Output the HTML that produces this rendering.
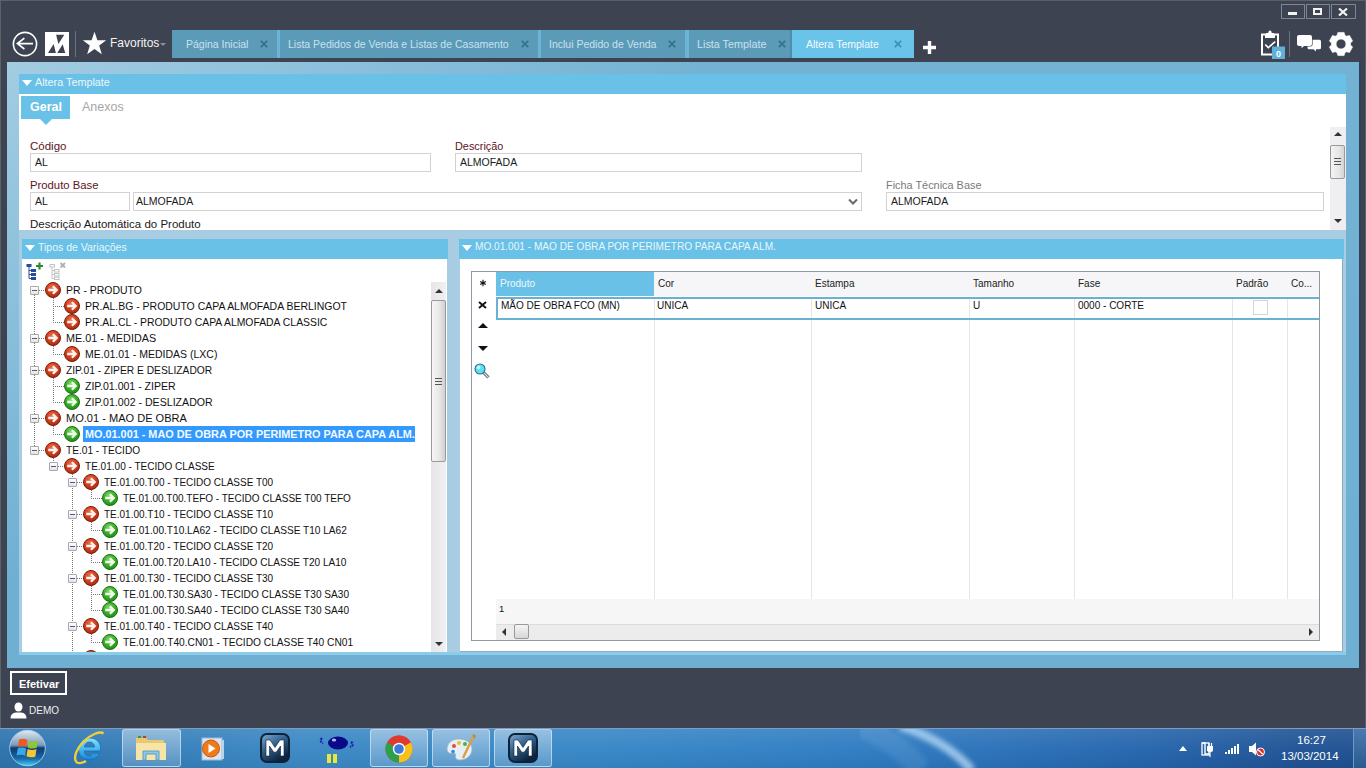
<!DOCTYPE html><html><head><meta charset="utf-8"><style>

*{margin:0;padding:0;box-sizing:border-box}
html,body{width:1366px;height:768px;overflow:hidden}
body{position:relative;background:#3d4350;font-family:"Liberation Sans",sans-serif;color:#1e1e1e}
.ab{position:absolute}
.t{position:absolute;white-space:nowrap;line-height:1}
.tab{position:absolute;top:30px;height:28px;background:#5b9bb8}
.tab .tx{position:absolute;top:9px;font-size:10.5px;color:#c9e2ee;white-space:nowrap;line-height:1}
.tab .cl{position:absolute;top:10px;width:8px;height:8px}
.fld{position:absolute;background:#fff;border:1px solid #d2d2d2;height:19px}
.fld span{position:absolute;left:4px;top:3px;font-size:10.5px;color:#1a1a1a;white-space:nowrap;line-height:1}
.lbl{position:absolute;font-size:11.5px;color:#5e1424;white-space:nowrap;line-height:1}
.hdr{position:absolute;height:20px;background:#69c1e7}
.hdr .tri{position:absolute;left:3px;top:6px;width:0;height:0;border-left:5px solid transparent;border-right:5px solid transparent;border-top:6px solid #fff}
.hdr span{position:absolute;left:16px;top:3px;font-size:10.5px;color:#e9f6fc;white-space:nowrap;line-height:1}
.row{position:absolute;height:16px;white-space:nowrap}
.row .tx{position:absolute;top:4px;font-size:10.55px;color:#111;line-height:1}
.dv{position:absolute;width:1px;background-image:linear-gradient(#777 50%,transparent 50%);background-size:1px 2px}
.dh{position:absolute;height:1px;background-image:linear-gradient(90deg,#777 50%,transparent 50%);background-size:2px 1px}
.exp{position:absolute;width:9px;height:9px;border:1px solid #a8a8a8;background:linear-gradient(#fff,#e4e4e4);border-radius:1px}
.exp:after{content:"";position:absolute;left:1px;top:3px;width:5px;height:1px;background:#55558f}
.ic{position:absolute;width:16px;height:16px}
.gh{position:absolute;top:272px;height:24px;font-size:9.5px;color:#222;line-height:1}
.gh span{position:absolute;left:4px;top:8px;white-space:nowrap}
.csep{position:absolute;top:297px;width:1px;height:302px;background:#e6e6e6}
.gc{position:absolute;top:301px;font-size:10px;color:#111;white-space:nowrap;line-height:1}

</style></head><body>
<svg width="0" height="0" style="position:absolute">
<defs>
<radialGradient id="gr" cx="45%" cy="35%" r="65%"><stop offset="0" stop-color="#f0745a"/><stop offset="0.55" stop-color="#d2401f"/><stop offset="1" stop-color="#a82a10"/></radialGradient>
<radialGradient id="gg" cx="45%" cy="35%" r="65%"><stop offset="0" stop-color="#8ee070"/><stop offset="0.55" stop-color="#3cb02c"/><stop offset="1" stop-color="#238a18"/></radialGradient>
<symbol id="ir" viewBox="0 0 16 16"><circle cx="8" cy="8" r="7.5" fill="url(#gr)" stroke="#7a1e0c" stroke-width="1"/><path d="M3.2 8H11.6M7.9 4.2L11.7 8L7.9 11.8" fill="none" stroke="#fff3ee" stroke-width="2.3"/></symbol>
<symbol id="ig" viewBox="0 0 16 16"><circle cx="8" cy="8" r="7.5" fill="url(#gg)" stroke="#1f6e14" stroke-width="1"/><path d="M3.2 8H11.6M7.9 4.2L11.7 8L7.9 11.8" fill="none" stroke="#f2ffee" stroke-width="2.3"/></symbol>
</defs></svg>
<div class="ab" style="left:0;top:0;width:1366px;height:1px;background:#5a606a"></div>
<div class="ab" style="left:0;top:0;width:1px;height:728px;background:#5a6468"></div>
<div class="ab" style="left:1365px;top:0;width:1px;height:728px;background:#5a5e68"></div>
<div class="ab" style="left:1281px;top:4px;width:24px;height:15px;border:1px solid #7b8794"></div>
<div class="ab" style="left:1306px;top:4px;width:24px;height:15px;border:1px solid #7b8794"></div>
<div class="ab" style="left:1331px;top:4px;width:25px;height:15px;border:1px solid #7b8794"></div>
<div class="ab" style="left:1288px;top:12px;width:9px;height:3px;background:#f2f2f2"></div>
<div class="ab" style="left:1313px;top:8px;width:9px;height:7px;border:2px solid #f2f2f2;border-top-width:2px"></div>
<svg class="ab" style="left:1338px;top:8px" width="10" height="8" viewBox="0 0 10 8"><path d="M1 0.5L9 7.5M9 0.5L1 7.5" stroke="#f2f2f2" stroke-width="2.2"/></svg>
<svg class="ab" style="left:12px;top:31px" width="26" height="26" viewBox="0 0 26 26"><circle cx="13" cy="13" r="11.6" fill="none" stroke="#fff" stroke-width="1.6"/><path d="M5.2 12.6H21M12.4 7.2L5.4 12.6L12.4 18" fill="none" stroke="#fff" stroke-width="1.7" stroke-linejoin="miter"/></svg>
<svg class="ab" style="left:45px;top:32px" width="24" height="24" viewBox="0 0 24 24"><rect width="24" height="24" fill="#fff"/><path d="M11.1 2.8H19.3L13.4 11.9Z M3 21H10.9L8.6 12.1Z M12.2 21H20.2L17.7 12.3Z" fill="#3d4350"/></svg>
<div class="ab" style="left:75px;top:31px;width:1px;height:26px;background:#6a727d"></div>
<svg class="ab" style="left:82px;top:31px" width="25" height="25" viewBox="0 0 25 25"><path d="M12.5 0.8L15.4 9.2L24.2 9.3L17.2 14.6L19.8 23.2L12.5 18L5.2 23.2L7.8 14.6L0.8 9.3L9.6 9.2Z" fill="#fff"/></svg>
<div class="t" style="left:110px;top:37px;font-size:12px;color:#f4f4f4">Favoritos</div>
<div class="ab" style="left:160px;top:43px;width:0;height:0;border-left:3px solid transparent;border-right:3px solid transparent;border-top:3px solid #8a929c"></div>
<div class="tab" style="left:172px;width:105px;background:#5b9bb8"><div class="tx" style="left:14px;color:#c9e2ee;font-size:10.5px">Página Inicial</div><svg class="cl" style="left:88px" viewBox="0 0 8 8"><path d="M0.8 0.8L7.2 7.2M7.2 0.8L0.8 7.2" stroke="#3a6f88" stroke-width="1.7"/></svg></div>
<div class="tab" style="left:280px;width:258px;background:#5b9bb8"><div class="tx" style="left:8px;color:#c9e2ee;font-size:10.5px">Lista Pedidos de Venda e Listas de Casamento</div><svg class="cl" style="left:241px" viewBox="0 0 8 8"><path d="M0.8 0.8L7.2 7.2M7.2 0.8L0.8 7.2" stroke="#3a6f88" stroke-width="1.7"/></svg></div>
<div class="tab" style="left:541px;width:144px;background:#5b9bb8"><div class="tx" style="left:8px;color:#c9e2ee;font-size:10.5px">Inclui Pedido de Venda</div><svg class="cl" style="left:127px" viewBox="0 0 8 8"><path d="M0.8 0.8L7.2 7.2M7.2 0.8L0.8 7.2" stroke="#3a6f88" stroke-width="1.7"/></svg></div>
<div class="tab" style="left:689px;width:103px;background:#5b9bb8"><div class="tx" style="left:8px;color:#c9e2ee;font-size:10.8px">Lista Template</div><svg class="cl" style="left:89px" viewBox="0 0 8 8"><path d="M0.8 0.8L7.2 7.2M7.2 0.8L0.8 7.2" stroke="#3a6f88" stroke-width="1.7"/></svg></div>
<div class="tab" style="left:792px;width:122px;background:#6ac3e8"><div class="tx" style="left:14px;color:#f4fbff;font-size:10.5px">Altera Template</div><svg class="cl" style="left:102px" viewBox="0 0 8 8"><path d="M0.8 0.8L7.2 7.2M7.2 0.8L0.8 7.2" stroke="#3d90b5" stroke-width="1.7"/></svg></div>
<div class="ab" style="left:277px;top:30px;width:3px;height:28px;background:#6db5d6"></div>
<div class="ab" style="left:538px;top:30px;width:3px;height:28px;background:#6db5d6"></div>
<div class="ab" style="left:685px;top:30px;width:4px;height:28px;background:#6db5d6"></div>
<div class="ab" style="left:790px;top:30px;width:2px;height:28px;background:#4d8eac"></div>
<svg class="ab" style="left:922px;top:40px" width="15" height="15" viewBox="0 0 15 15"><path d="M7.5 1V14M1 7.5H14" stroke="#fff" stroke-width="3.4"/></svg>
<svg class="ab" style="left:1259px;top:30px" width="28" height="30" viewBox="0 0 28 30">
<path d="M3 4.5H7V7H15V4.5H19V24.5H3Z" fill="none" stroke="#fff" stroke-width="2"/>
<rect x="7" y="3" width="8" height="4" fill="#fff"/><circle cx="11" cy="2.2" r="1.6" fill="#fff"/>
<path d="M6.2 14.5L9.3 17.6L16.2 11.6" fill="none" stroke="#fff" stroke-width="1.6"/>
<rect x="13" y="16.5" width="13" height="12.5" fill="#5fb0da"/>
<text x="19.5" y="26.5" style="font:bold 9px 'Liberation Sans'" fill="#fff" text-anchor="middle">0</text>
</svg>
<div class="ab" style="left:1289px;top:31px;width:1px;height:26px;background:#6a727d"></div>
<svg class="ab" style="left:1296px;top:34px" width="26" height="20" viewBox="0 0 26 20">
<path d="M1 3Q1 1 3 1H14Q16 1 16 3V10Q16 12 14 12H8L5.5 14.2V12H3Q1 12 1 10Z" fill="#fff"/>
<path d="M10.5 5H24Q26 5 26 7V14Q26 16 24 16H20.5V18.6L17.5 16H12.5Q10.5 16 10.5 14V12.8H14Q17 12.8 17 10V5Z" fill="#3d4350"/>
<path d="M11.5 5.8H23.5Q25 5.8 25 7.3V13.8Q25 15.3 23.5 15.3H20V17.6L17.5 15.3H13Q11.5 15.3 11.5 13.8V12.5H14.5Q16.6 12.5 16.6 10.2V5.8Z" fill="#fff"/>
</svg>
<svg class="ab" style="left:1328px;top:31px" width="26" height="26" viewBox="0 0 26 26">
<path fill="#fff" fill-rule="evenodd" d="M9.10 4.23 L9.89 1.41 L16.11 1.41 L16.90 4.23 L18.64 5.23 L21.49 4.51 L24.59 9.89 L22.55 12.00 L22.55 14.00 L24.59 16.11 L21.49 21.49 L18.64 20.77 L16.90 21.77 L16.11 24.59 L9.89 24.59 L9.10 21.77 L7.36 20.77 L4.51 21.49 L1.41 16.11 L3.45 14.00 L3.45 12.00 L1.41 9.89 L4.51 4.51 L7.36 5.23Z M13 8.1A4.9 4.9 0 1 0 13.01 8.1Z" stroke="#fff" stroke-width="0.6" stroke-linejoin="round"/>
</svg>
<div class="ab" style="left:7px;top:62px;width:1352px;height:606px;background:radial-gradient(ellipse 700px 520px at 0px 0px,#a2cce2 0%,rgba(112,176,211,0) 100%),linear-gradient(#74b2d3 0px,#6eafd2 100%)"></div>
<div class="ab" style="left:1359px;top:62px;width:2px;height:606px;background:#2e4358"></div>
<div class="hdr" style="left:19px;top:74px;width:1327px"><div class="tri"></div><span style="font-size:10.8px">Altera Template</span></div>
<div class="ab" style="left:19px;top:94px;width:1327px;height:136px;background:#fff"></div>
<div class="ab" style="left:21px;top:96px;width:49px;height:23px;background:#69c1e7"></div>
<div class="ab" style="left:40px;top:119px;width:0;height:0;border-left:6px solid transparent;border-right:6px solid transparent;border-top:6px solid #69c1e7"></div>
<div class="t" style="left:30px;top:101px;font-size:12.5px;font-weight:bold;color:#fff">Geral</div>
<div class="t" style="left:82px;top:101px;font-size:12.5px;color:#a6a6a6">Anexos</div>
<div class="lbl" style="left:30px;top:141px">Código</div>
<div class="fld" style="left:30px;top:153px;width:401px"><span>AL</span></div>
<div class="lbl" style="left:455px;top:141px;font-size:10.9px">Descrição</div>
<div class="fld" style="left:455px;top:153px;width:407px"><span>ALMOFADA</span></div>
<div class="lbl" style="left:30px;top:180px;font-size:11.3px">Produto Base</div>
<div class="fld" style="left:30px;top:192px;width:100px"><span>AL</span></div>
<div class="fld" style="left:133px;top:192px;width:729px"><span style="left:2px">ALMOFADA</span><svg class="ab" style="left:714px;top:5px" width="10" height="7" viewBox="0 0 10 7"><path d="M1 1.5L5 5.5L9 1.5" fill="none" stroke="#6a6a6a" stroke-width="2"/></svg></div>
<div class="lbl" style="left:886px;top:180px;color:#7a7a7a;font-size:10.9px">Ficha Técnica Base</div>
<div class="fld" style="left:886px;top:192px;width:438px"><span>ALMOFADA</span></div>
<div class="t" style="left:30px;top:219px;font-size:11.5px;color:#1a1a1a">Descrição Automática do Produto</div>
<div class="ab" style="left:1330px;top:127px;width:16px;height:103px;background:#efeff1"></div>
<div class="ab" style="left:1334px;top:132px;width:0;height:0;border-left:4px solid transparent;border-right:4px solid transparent;border-bottom:4px solid #333"></div>
<div class="ab" style="left:1334px;top:219px;width:0;height:0;border-left:4px solid transparent;border-right:4px solid transparent;border-top:4px solid #333"></div>
<div class="ab" style="left:1330px;top:145px;width:15px;height:34px;border:1px solid #9a9a9a;border-radius:2px;background:linear-gradient(90deg,#f4f4f4,#e6e6e6 60%,#d4d4d6)"></div>
<div class="ab" style="left:1334px;top:158px;width:7px;height:1px;background:#555"></div>
<div class="ab" style="left:1334px;top:161px;width:7px;height:1px;background:#555"></div>
<div class="ab" style="left:1334px;top:164px;width:7px;height:1px;background:#555"></div>
<div class="ab" style="left:19px;top:230px;width:1327px;height:425px;background:#a8cde2"></div>
<div class="ab" style="left:19px;top:652px;width:1327px;height:3px;background:#8ccbea"></div>
<div class="hdr" style="left:22px;top:239px;width:426px"><div class="tri"></div><span>Tipos de Variações</span></div>
<div class="ab" style="left:22px;top:259px;width:425px;height:393px;background:#fff;overflow:hidden" id="lp">
<svg class="ab" style="left:4px;top:3px" width="18" height="18" viewBox="0 0 18 18">
<g fill="#2a4a9a"><rect x="0.5" y="2" width="5" height="3"/><rect x="5" y="7" width="5" height="3"/><rect x="5" y="11" width="5" height="3"/><rect x="5" y="15" width="5" height="3"/></g>
<path d="M3 5V16.5H5M3 8.5H5M3 12.5H5" fill="none" stroke="#2a4a9a" stroke-width="1"/>
<path d="M13.5 0.5V7.5M10 4H17" stroke="#2e8a2e" stroke-width="2.2"/></svg>
<svg class="ab" style="left:27px;top:3px" width="18" height="18" viewBox="0 0 18 18">
<g fill="none" stroke="#c4c4c4"><rect x="1" y="2.5" width="4.5" height="2.5"/><rect x="5.5" y="7.5" width="4.5" height="2.5"/><rect x="5.5" y="11.5" width="4.5" height="2.5"/><rect x="5.5" y="15" width="4.5" height="2.5"/>
<path d="M3 5V16.5H5.5M3 8.5H5.5M3 12.5H5.5"/></g>
<path d="M11.5 1L16 5.5M16 1L11.5 5.5" stroke="#b0b0b0" stroke-width="1.8"/></svg>
<div class="dh" style="left:17px;top:31px;width:6px"></div>
<div class="dh" style="left:31px;top:47px;width:11px"></div>
<div class="dh" style="left:31px;top:63px;width:11px"></div>
<div class="dh" style="left:17px;top:79px;width:6px"></div>
<div class="dh" style="left:31px;top:95px;width:11px"></div>
<div class="dh" style="left:17px;top:111px;width:6px"></div>
<div class="dh" style="left:31px;top:127px;width:11px"></div>
<div class="dh" style="left:31px;top:143px;width:11px"></div>
<div class="dh" style="left:17px;top:159px;width:6px"></div>
<div class="dh" style="left:31px;top:175px;width:11px"></div>
<div class="dh" style="left:17px;top:191px;width:6px"></div>
<div class="dh" style="left:36px;top:207px;width:6px"></div>
<div class="dh" style="left:55px;top:223px;width:6px"></div>
<div class="dh" style="left:69px;top:239px;width:11px"></div>
<div class="dh" style="left:55px;top:255px;width:6px"></div>
<div class="dh" style="left:69px;top:271px;width:11px"></div>
<div class="dh" style="left:55px;top:287px;width:6px"></div>
<div class="dh" style="left:69px;top:303px;width:11px"></div>
<div class="dh" style="left:55px;top:319px;width:6px"></div>
<div class="dh" style="left:69px;top:335px;width:11px"></div>
<div class="dh" style="left:69px;top:351px;width:11px"></div>
<div class="dh" style="left:55px;top:367px;width:6px"></div>
<div class="dh" style="left:69px;top:383px;width:11px"></div>
<div class="dh" style="left:55px;top:399px;width:6px"></div>
<div class="dv" style="left:31px;top:39px;height:24px"></div>
<div class="dv" style="left:31px;top:87px;height:8px"></div>
<div class="dv" style="left:31px;top:119px;height:24px"></div>
<div class="dv" style="left:31px;top:167px;height:8px"></div>
<div class="dv" style="left:31px;top:199px;height:8px"></div>
<div class="dv" style="left:50px;top:215px;height:178px"></div>
<div class="dv" style="left:69px;top:231px;height:8px"></div>
<div class="dv" style="left:69px;top:263px;height:8px"></div>
<div class="dv" style="left:69px;top:295px;height:8px"></div>
<div class="dv" style="left:69px;top:327px;height:24px"></div>
<div class="dv" style="left:69px;top:375px;height:8px"></div>
<div class="dv" style="left:12px;top:32px;height:160px"></div>
<div class="exp" style="left:8px;top:27px"></div>
<div class="exp" style="left:8px;top:75px"></div>
<div class="exp" style="left:8px;top:107px"></div>
<div class="exp" style="left:8px;top:155px"></div>
<div class="exp" style="left:8px;top:187px"></div>
<div class="exp" style="left:27px;top:203px"></div>
<div class="exp" style="left:46px;top:219px"></div>
<div class="exp" style="left:46px;top:251px"></div>
<div class="exp" style="left:46px;top:283px"></div>
<div class="exp" style="left:46px;top:315px"></div>
<div class="exp" style="left:46px;top:363px"></div>
<div class="exp" style="left:46px;top:395px"></div>
<svg class="ic" style="left:23px;top:23px" viewBox="0 0 16 16"><use href="#ir"/></svg>
<div class="row" style="left:0;top:23px"><div class="tx" style="left:44px;font-size:10.46px">PR - PRODUTO</div></div>
<svg class="ic" style="left:42px;top:39px" viewBox="0 0 16 16"><use href="#ir"/></svg>
<div class="row" style="left:0;top:39px"><div class="tx" style="left:63px;font-size:10.47px">PR.AL.BG - PRODUTO CAPA ALMOFADA BERLINGOT</div></div>
<svg class="ic" style="left:42px;top:55px" viewBox="0 0 16 16"><use href="#ir"/></svg>
<div class="row" style="left:0;top:55px"><div class="tx" style="left:63px;font-size:10.4px">PR.AL.CL - PRODUTO CAPA ALMOFADA CLASSIC</div></div>
<svg class="ic" style="left:23px;top:71px" viewBox="0 0 16 16"><use href="#ir"/></svg>
<div class="row" style="left:0;top:70px"><div class="tx" style="left:44px;font-size:10.82px">ME.01 - MEDIDAS</div></div>
<svg class="ic" style="left:42px;top:87px" viewBox="0 0 16 16"><use href="#ir"/></svg>
<div class="row" style="left:0;top:86px"><div class="tx" style="left:63px;font-size:10.51px">ME.01.01 - MEDIDAS (LXC)</div></div>
<svg class="ic" style="left:23px;top:103px" viewBox="0 0 16 16"><use href="#ir"/></svg>
<div class="row" style="left:0;top:103px"><div class="tx" style="left:44px;font-size:10.25px">ZIP.01 - ZIPER E DESLIZADOR</div></div>
<svg class="ic" style="left:42px;top:119px" viewBox="0 0 16 16"><use href="#ig"/></svg>
<div class="row" style="left:0;top:118px"><div class="tx" style="left:63px;font-size:10.55px">ZIP.01.001 - ZIPER</div></div>
<svg class="ic" style="left:42px;top:135px" viewBox="0 0 16 16"><use href="#ig"/></svg>
<div class="row" style="left:0;top:134px"><div class="tx" style="left:63px;font-size:10.62px">ZIP.01.002 - DESLIZADOR</div></div>
<svg class="ic" style="left:23px;top:151px" viewBox="0 0 16 16"><use href="#ir"/></svg>
<div class="row" style="left:0;top:150px"><div class="tx" style="left:44px;font-size:11.06px">MO.01 - MAO DE OBRA</div></div>
<svg class="ic" style="left:42px;top:167px" viewBox="0 0 16 16"><use href="#ig"/></svg>
<div class="ab" style="left:61px;top:167px;width:332px;height:16px;background:#3399ff"></div>
<div class="row" style="left:0;top:166px"><div class="tx" style="left:63px;color:#f2fbff;font-weight:bold;font-size:10.86px">MO.01.001 - MAO DE OBRA POR PERIMETRO PARA CAPA ALM.</div></div>
<svg class="ic" style="left:23px;top:183px" viewBox="0 0 16 16"><use href="#ir"/></svg>
<div class="row" style="left:0;top:183px"><div class="tx" style="left:44px;font-size:10.13px">TE.01 - TECIDO</div></div>
<svg class="ic" style="left:42px;top:199px" viewBox="0 0 16 16"><use href="#ir"/></svg>
<div class="row" style="left:0;top:199px"><div class="tx" style="left:63px;font-size:10.04px">TE.01.00 - TECIDO CLASSE</div></div>
<svg class="ic" style="left:61px;top:215px" viewBox="0 0 16 16"><use href="#ir"/></svg>
<div class="row" style="left:0;top:215px"><div class="tx" style="left:82px;font-size:10.01px">TE.01.00.T00 - TECIDO CLASSE T00</div></div>
<svg class="ic" style="left:80px;top:231px" viewBox="0 0 16 16"><use href="#ig"/></svg>
<div class="row" style="left:0;top:231px"><div class="tx" style="left:101px;font-size:10.0px">TE.01.00.T00.TEFO - TECIDO CLASSE T00 TEFO</div></div>
<svg class="ic" style="left:61px;top:247px" viewBox="0 0 16 16"><use href="#ir"/></svg>
<div class="row" style="left:0;top:247px"><div class="tx" style="left:82px;font-size:10.01px">TE.01.00.T10 - TECIDO CLASSE T10</div></div>
<svg class="ic" style="left:80px;top:263px" viewBox="0 0 16 16"><use href="#ig"/></svg>
<div class="row" style="left:0;top:263px"><div class="tx" style="left:101px;font-size:10.12px">TE.01.00.T10.LA62 - TECIDO CLASSE T10 LA62</div></div>
<svg class="ic" style="left:61px;top:279px" viewBox="0 0 16 16"><use href="#ir"/></svg>
<div class="row" style="left:0;top:279px"><div class="tx" style="left:82px;font-size:10.01px">TE.01.00.T20 - TECIDO CLASSE T20</div></div>
<svg class="ic" style="left:80px;top:295px" viewBox="0 0 16 16"><use href="#ig"/></svg>
<div class="row" style="left:0;top:295px"><div class="tx" style="left:101px;font-size:10.1px">TE.01.00.T20.LA10 - TECIDO CLASSE T20 LA10</div></div>
<svg class="ic" style="left:61px;top:311px" viewBox="0 0 16 16"><use href="#ir"/></svg>
<div class="row" style="left:0;top:311px"><div class="tx" style="left:82px;font-size:10.01px">TE.01.00.T30 - TECIDO CLASSE T30</div></div>
<svg class="ic" style="left:80px;top:327px" viewBox="0 0 16 16"><use href="#ig"/></svg>
<div class="row" style="left:0;top:327px"><div class="tx" style="left:101px;font-size:10.12px">TE.01.00.T30.SA30 - TECIDO CLASSE T30 SA30</div></div>
<svg class="ic" style="left:80px;top:343px" viewBox="0 0 16 16"><use href="#ig"/></svg>
<div class="row" style="left:0;top:343px"><div class="tx" style="left:101px;font-size:10.12px">TE.01.00.T30.SA40 - TECIDO CLASSE T30 SA40</div></div>
<svg class="ic" style="left:61px;top:359px" viewBox="0 0 16 16"><use href="#ir"/></svg>
<div class="row" style="left:0;top:359px"><div class="tx" style="left:82px;font-size:10.01px">TE.01.00.T40 - TECIDO CLASSE T40</div></div>
<svg class="ic" style="left:80px;top:375px" viewBox="0 0 16 16"><use href="#ig"/></svg>
<div class="row" style="left:0;top:375px"><div class="tx" style="left:101px;font-size:10.2px">TE.01.00.T40.CN01 - TECIDO CLASSE T40 CN01</div></div>
<svg class="ic" style="left:61px;top:391px" viewBox="0 0 16 16"><use href="#ir"/></svg>
<div class="row" style="left:0;top:391px"><div class="tx" style="left:82px;font-size:10.1px">TE.01.00.T50</div></div>
<div class="ab" style="left:409px;top:23px;width:15px;height:370px;background:linear-gradient(90deg,#e6e6e8,#f0eff2)"></div>
<div class="ab" style="left:413px;top:30px;width:0;height:0;border-left:4px solid transparent;border-right:4px solid transparent;border-bottom:4px solid #333"></div>
<div class="ab" style="left:413px;top:383px;width:0;height:0;border-left:4px solid transparent;border-right:4px solid transparent;border-top:4px solid #333"></div>
<div class="ab" style="left:409px;top:41px;width:15px;height:162px;border:1px solid #9a9a9a;border-radius:2px;background:linear-gradient(90deg,#f6f6f6,#e8e8e8 55%,#d0d0d2)"></div>
<div class="ab" style="left:413px;top:119px;width:7px;height:1px;background:#555"></div>
<div class="ab" style="left:413px;top:122px;width:7px;height:1px;background:#555"></div>
<div class="ab" style="left:413px;top:125px;width:7px;height:1px;background:#555"></div>
</div>
<div class="hdr" style="left:459px;top:239px;width:885px"><div class="tri"></div><span style="font-size:10.1px">MO.01.001 - MAO DE OBRA POR PERIMETRO PARA CAPA ALM.</span></div>
<div class="ab" style="left:460px;top:259px;width:882px;height:392px;background:#fff"></div>
<div class="ab" style="left:1342px;top:259px;width:1px;height:393px;background:#90acbc"></div>
<div class="ab" style="left:460px;top:651px;width:883px;height:1px;background:#90acbc"></div>
<div class="ab" style="left:471px;top:271px;width:849px;height:370px;border:1px solid #8d9aa6;background:#fff"></div>
<div class="ab" style="left:496px;top:272px;width:823px;height:24px;background:#f6f6f8"></div>
<div class="ab" style="left:496px;top:272px;width:158px;height:24px;background:#69c1e7"></div>
<div class="t" style="left:500px;top:279px;font-size:10px;color:#eef8fd">Produto</div>
<div class="t" style="left:658px;top:279px;font-size:10px;color:#222">Cor</div>
<div class="t" style="left:815px;top:279px;font-size:10px;color:#222">Estampa</div>
<div class="t" style="left:973px;top:279px;font-size:10px;color:#222">Tamanho</div>
<div class="t" style="left:1078px;top:279px;font-size:10px;color:#222">Fase</div>
<div class="t" style="left:1236px;top:279px;font-size:10px;color:#222">Padrão</div>
<div class="t" style="left:1291px;top:279px;font-size:10px;color:#222">Co...</div>
<div class="csep" style="left:654px"></div>
<div class="csep" style="left:811px"></div>
<div class="csep" style="left:969px"></div>
<div class="csep" style="left:1074px"></div>
<div class="csep" style="left:1232px"></div>
<div class="csep" style="left:1287px"></div>
<div class="ab" style="left:496px;top:297px;width:823px;height:23px;border:2px solid #69b2d3;border-right:none"></div>
<div class="gc" style="left:501px">MÃO DE OBRA FCO (MN)</div>
<div class="gc" style="left:657px">UNICA</div>
<div class="gc" style="left:815px">UNICA</div>
<div class="gc" style="left:973px">U</div>
<div class="gc" style="left:1078px">0000 - CORTE</div>
<div class="ab" style="left:1253px;top:300px;width:15px;height:15px;border:1px solid #d6d6d6;background:#fff"></div>
<svg class="ab" style="left:479px;top:279px" width="8" height="8" viewBox="0 0 8 8"><path d="M4 0.8V7.2M1.2 2.4L6.8 5.6M6.8 2.4L1.2 5.6" stroke="#111" stroke-width="1.15"/></svg>
<svg class="ab" style="left:478px;top:301px" width="9" height="8" viewBox="0 0 9 8"><path d="M1 1L8 7M8 1L1 7" stroke="#111" stroke-width="1.9"/></svg>
<div class="ab" style="left:478px;top:323px;width:0;height:0;border-left:5px solid transparent;border-right:5px solid transparent;border-bottom:5px solid #111"></div>
<div class="ab" style="left:478px;top:346px;width:0;height:0;border-left:5px solid transparent;border-right:5px solid transparent;border-top:5px solid #111"></div>
<svg class="ab" style="left:474px;top:363px" width="16" height="16" viewBox="0 0 16 16"><path d="M9.5 9.5L14.5 14.5" stroke="#4a5560" stroke-width="3"/><path d="M9.5 9.5L14.5 14.5" stroke="#d8dde2" stroke-width="1.2"/><circle cx="6" cy="6" r="5" fill="#5ee0f2" stroke="#2a6a8a" stroke-width="1.1"/><circle cx="4.6" cy="4.4" r="1.8" fill="#c8f8ff"/></svg>
<div class="ab" style="left:496px;top:599px;width:823px;height:25px;background:#f6f6f6"></div>
<div class="t" style="left:499px;top:604px;font-size:9.5px;color:#111">1</div>
<div class="ab" style="left:496px;top:624px;width:823px;height:16px;background:#ececec;border-top:1px solid #dcdcdc"></div>
<div class="ab" style="left:502px;top:628px;width:0;height:0;border-top:4px solid transparent;border-bottom:4px solid transparent;border-right:4px solid #333"></div>
<div class="ab" style="left:1309px;top:628px;width:0;height:0;border-top:4px solid transparent;border-bottom:4px solid transparent;border-left:4px solid #333"></div>
<div class="ab" style="left:514px;top:624px;width:15px;height:15px;border:1px solid #999;border-radius:2px;background:linear-gradient(#f4f4f4,#d8d8d8)"></div>
<div class="ab" style="left:10px;top:671px;width:57px;height:24px;border:2px solid #fff"></div>
<div class="t" style="left:19px;top:679px;font-size:11px;font-weight:bold;color:#fff">Efetivar</div>
<svg class="ab" style="left:10px;top:702px" width="17" height="17" viewBox="0 0 17 17"><ellipse cx="8.5" cy="5" rx="4" ry="4.6" fill="#fff"/><path d="M0.5 16.5Q0.5 11 6 10.5H11Q16.5 11 16.5 16.5Z" fill="#fff"/></svg>
<div class="t" style="left:29px;top:706px;font-size:10px;color:#f0f0f0">DEMO</div>
<div class="ab" style="left:0;top:728px;width:1366px;height:40px;background:linear-gradient(90deg,#2c72ae 0px,#3a88c4 300px,#3686c6 600px,#2e7cc2 850px,#2a70b8 1000px,#2464ac 1150px,#1e5294 1300px,#1e4f90 1366px)"></div>
<div class="ab" style="left:0;top:729px;width:1366px;height:39px;background:linear-gradient(rgba(255,255,255,0.10),rgba(255,255,255,0.03) 50%,rgba(0,0,0,0.04))"></div>
<svg class="ab" style="left:860px;top:728px" width="160" height="40" viewBox="0 0 160 40"><defs><filter id="bl" x="-50%" y="-50%" width="200%" height="200%"><feGaussianBlur stdDeviation="2.5"/></filter></defs><path d="M40 -2Q85 12 112 42" fill="none" stroke="#b8dcf8" stroke-width="9" opacity="0.75" filter="url(#bl)"/><path d="M0 -2Q40 15 60 42" fill="none" stroke="#9ccaf0" stroke-width="22" opacity="0.15" filter="url(#bl)"/></svg>
<div class="ab" style="left:0;top:728px;width:1366px;height:1px;background:#7d9cc0"></div>
<svg class="ab" style="left:8px;top:729px" width="40" height="38" viewBox="0 0 40 38">
<defs>
<linearGradient id="orbg" x1="0" y1="0" x2="0" y2="1"><stop offset="0" stop-color="#e0eaf2"/><stop offset="0.42" stop-color="#7a9cba"/><stop offset="0.5" stop-color="#0e3c70"/><stop offset="0.8" stop-color="#1a6aa8"/><stop offset="1" stop-color="#40d0f8"/></linearGradient>
</defs>
<circle cx="19.5" cy="19" r="17.8" fill="url(#orbg)" stroke="#a8d0ec" stroke-width="0.9"/>
<path d="M11 10.5Q15 8.6 19.5 11L18.4 18.2Q14 16 10 17.8Z" fill="#f05a22"/>
<path d="M20.8 11.3Q25 13.6 29.8 11.4L28.7 18.8Q24.3 20.6 19.8 18.4Z" fill="#8cc83a"/>
<path d="M9.8 19.2Q14 17.4 18.2 19.6L17.1 26.8Q13 24.8 8.6 26.6Z" fill="#3aa8e8"/>
<path d="M19.6 19.9Q24 22 28.5 20L27.4 27.4Q23 29.4 18.5 27.2Z" fill="#f8c630"/>
</svg>
<div class="ab" style="left:122px;top:729px;width:59px;height:38px;border:1px solid rgba(225,242,255,0.6);border-radius:3px;background:linear-gradient(rgba(255,255,255,0.42),rgba(255,255,255,0.18))"></div>
<div class="ab" style="left:370px;top:729px;width:58px;height:38px;border:1px solid rgba(225,242,255,0.6);border-radius:3px;background:linear-gradient(rgba(255,255,255,0.42),rgba(255,255,255,0.18))"></div>
<div class="ab" style="left:432px;top:729px;width:58px;height:38px;border:1px solid rgba(225,242,255,0.6);border-radius:3px;background:linear-gradient(rgba(255,255,255,0.42),rgba(255,255,255,0.18))"></div>
<div class="ab" style="left:494px;top:729px;width:58px;height:38px;border:1px solid rgba(225,242,255,0.6);border-radius:3px;background:linear-gradient(rgba(255,255,255,0.42),rgba(255,255,255,0.18))"></div>
<svg class="ab" style="left:72px;top:730px" width="34" height="36" viewBox="0 0 34 36">
<defs><linearGradient id="ieg" x1="0" y1="0" x2="0" y2="1"><stop offset="0" stop-color="#8ae0fc"/><stop offset="0.6" stop-color="#38b0ec"/><stop offset="1" stop-color="#1a80d0"/></linearGradient></defs>
<path d="M18 8C10.8 8 6.5 13.2 6.5 19.5C6.5 25.8 11 30 17.3 30C22.3 30 26 27.4 27.3 23.3H20.6C19.8 24.9 18.7 25.8 17 25.8C14.2 25.8 12.4 23.8 12.2 21H28.3C28.5 20.2 28.6 19.3 28.6 18.4C28.6 12.4 24.2 8 18 8ZM12.4 17C12.8 14 14.8 12 17.6 12C20.4 12 22.3 14 22.6 17Z" fill="url(#ieg)" stroke="#1a6ab0" stroke-width="0.7"/>
<path d="M31.5 3.5C28 0.5 19 4.5 11.5 11.5C4.5 18.5 1.5 27 4 31.5C5.5 34 10 33.5 14 31" fill="none" stroke="#f2cc3a" stroke-width="2.4"/>
</svg>
<svg class="ab" style="left:134px;top:732px" width="34" height="32" viewBox="0 0 34 32">
<path d="M2 6H12L14 8H30V28H2Z" fill="#e8c870"/><rect x="4" y="4" width="3" height="2" fill="#3a9a3a"/><rect x="9" y="4" width="3" height="2" fill="#c03a2a"/>
<path d="M2 11H32V28H2Z" fill="#f6e4a8"/>
<path d="M9 19H25V28H22V22H12V28H9Z" fill="#8ac8ec" stroke="#4a90c0" stroke-width="0.8"/>
</svg>
<svg class="ab" style="left:198px;top:735px" width="28" height="28" viewBox="0 0 28 28">
<rect x="4" y="3" width="20" height="22" fill="#d6e6f4" stroke="#9ab8d6" stroke-width="1"/><rect x="24" y="5" width="2" height="19" fill="#bcd4ea"/>
<circle cx="13" cy="13.5" r="8.5" fill="#f07a1a" stroke="#c85a10" stroke-width="1"/><path d="M10.5 9L17.5 13.5L10.5 18Z" fill="#fff"/>
</svg>
<svg class="ab" style="left:259px;top:732px" width="32" height="32" viewBox="0 0 32 32">
<defs><linearGradient id="mg259" x1="0" y1="0" x2="0.6" y2="1"><stop offset="0" stop-color="#7aa6cc"/><stop offset="0.5" stop-color="#2e5e8a"/><stop offset="1" stop-color="#0c2440"/></linearGradient></defs>
<rect x="1" y="1" width="30" height="30" rx="7" fill="#0e2236"/>
<rect x="3" y="3" width="26" height="26" rx="5" fill="url(#mg259)"/>
<path d="M7 24V8H11L16 15.5L21 8H25V24H21.5V14L17.2 20.2H14.8L10.5 14V24Z" fill="#fff" stroke="#0c2038" stroke-width="0.6"/>
</svg>
<svg class="ab" style="left:507px;top:732px" width="32" height="32" viewBox="0 0 32 32">
<defs><linearGradient id="mg507" x1="0" y1="0" x2="0.6" y2="1"><stop offset="0" stop-color="#7aa6cc"/><stop offset="0.5" stop-color="#2e5e8a"/><stop offset="1" stop-color="#0c2440"/></linearGradient></defs>
<rect x="1" y="1" width="30" height="30" rx="7" fill="#0e2236"/>
<rect x="3" y="3" width="26" height="26" rx="5" fill="url(#mg507)"/>
<path d="M7 24V8H11L16 15.5L21 8H25V24H21.5V14L17.2 20.2H14.8L10.5 14V24Z" fill="#fff" stroke="#0c2038" stroke-width="0.6"/>
</svg>
<svg class="ab" style="left:318px;top:733px" width="38" height="32" viewBox="0 0 38 32">
<ellipse cx="20" cy="10" rx="10" ry="6.5" fill="#0a0a88"/><ellipse cx="16" cy="7" rx="2.2" ry="1.5" fill="#b0b8f8"/>
<path d="M4 5Q1 8 5 10.5M33 9Q37 12 32 14" fill="none" stroke="#1a1ab0" stroke-width="2.2" stroke-dasharray="2 1"/>
<rect x="9" y="21" width="4" height="9" fill="#e8e838"/><rect x="15" y="21" width="4" height="9" fill="#e8e838"/>
</svg>
<svg class="ab" style="left:384px;top:734px" width="30" height="30" viewBox="0 0 30 30">
<circle cx="15" cy="15" r="13.5" fill="#e03a2e"/>
<path d="M15 15L3.3 8.25A13.5 13.5 0 0 0 15 28.5Z" fill="#2ea04a"/>
<path d="M15 15L15 28.5A13.5 13.5 0 0 0 26.7 8.25Z" fill="#f6c21a"/>
<path d="M15 15L3.3 8.25A13.5 13.5 0 0 1 26.7 8.25Z" fill="#e03a2e"/>
<circle cx="15" cy="15" r="6.2" fill="#fff"/><circle cx="15" cy="15" r="4.8" fill="#3a7ad8"/>
</svg>
<svg class="ab" style="left:445px;top:733px" width="32" height="32" viewBox="0 0 32 32">
<path d="M14 6C6 6 2 11 2 16C2 20 5 21 8 20C10 19.5 11 21 10.5 23C10 25.5 12 27 15 27C22 27 27 22 27 16C27 10 21 6 14 6Z" fill="#e6eef6" stroke="#a0b0c0" stroke-width="0.8"/>
<circle cx="9" cy="13" r="2" fill="#e84a3a"/><circle cx="14" cy="10" r="2" fill="#f0c020"/><circle cx="20" cy="11" r="2" fill="#4ab04a"/><circle cx="8" cy="18.5" r="1.8" fill="#3a8ae0"/>
<path d="M29 2L18 25" stroke="#d8a040" stroke-width="2.4"/><path d="M27.5 1L31 2.5L29.5 6Z" fill="#c88030"/>
</svg>
<div class="ab" style="left:1179px;top:746px;width:0;height:0;border-left:4px solid transparent;border-right:4px solid transparent;border-bottom:5px solid #fff"></div>
<svg class="ab" style="left:1200px;top:740px" width="16" height="18" viewBox="0 0 16 18">
<path d="M2 3H5V14H9" fill="none" stroke="#fff" stroke-width="1.4"/><rect x="2" y="3" width="7" height="12" fill="none" stroke="#fff" stroke-width="1.3"/>
<path d="M7 6H13V10Q13 12 10 12Q7 12 7 10Z" fill="#fff"/><path d="M9 3V6M11.5 3V6M10 12V17" stroke="#fff" stroke-width="1.2"/>
</svg>
<svg class="ab" style="left:1224px;top:743px" width="16" height="12" viewBox="0 0 16 12"><g fill="#fff"><rect x="1" y="9" width="2" height="2"/><rect x="4" y="7" width="2" height="4"/><rect x="7" y="5" width="2" height="6"/><rect x="10" y="3" width="2" height="8"/><rect x="13" y="1" width="2" height="10"/></g></svg>
<svg class="ab" style="left:1248px;top:741px" width="18" height="16" viewBox="0 0 18 16">
<path d="M1 5H4L8 1.5V14.5L4 11H1Z" fill="#fff"/><circle cx="12.5" cy="11" r="4" fill="#e02828" stroke="#fff" stroke-width="1"/><path d="M10 8.8L15 13.2" stroke="#fff" stroke-width="1.3"/>
</svg>
<div class="t" style="left:1297px;top:735px;font-size:11.5px;color:#fff">16:27</div>
<div class="t" style="left:1281px;top:751px;font-size:11.5px;color:#fff">13/03/2014</div>
<div class="ab" style="left:1353px;top:729px;width:13px;height:39px;border-left:1px solid #6a9ac8;background:linear-gradient(#4a7ab0,#2a5a90)"></div>
</body></html>
